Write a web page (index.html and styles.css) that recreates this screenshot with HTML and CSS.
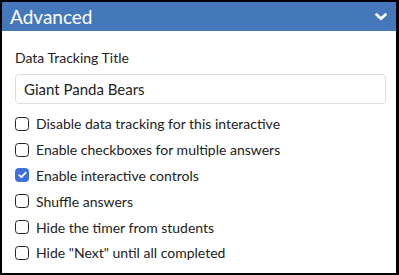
FILE: index.html
```html
<!DOCTYPE html>
<html>
<head>
    <title>Advanced</title>
    <link rel="stylesheet" href="styles.css">
</head>
<body>
    <div class="panel">
        <div class="panel-header">
            <span class="panel-title">Advanced</span>
            <svg class="chevron" width="12" height="8" viewBox="0 0 12 8">
                <path d="M1.5 1.5 L6 5.8 L10.5 1.5" fill="none" stroke="#fff" stroke-width="2.6" stroke-linecap="round" stroke-linejoin="round"/>
            </svg>
        </div>
        <div class="panel-body">
            <label class="field-label">Data Tracking Title</label>
            <input class="text-input" type="text" value="Giant Panda Bears">
            <ul class="options">
                <li class="option"><span class="box"></span>Disable data tracking for this interactive</li>
                <li class="option"><span class="box"></span>Enable checkboxes for multiple answers</li>
                <li class="option">
                    <span class="box checked">
                        <svg width="9" height="8" viewBox="0 0 9 8">
                            <path d="M1.3 4.2 L3.5 6.2 L7.7 1.6" fill="none" stroke="#fff" stroke-width="1.8" stroke-linecap="round" stroke-linejoin="round"/>
                        </svg>
                    </span>Enable interactive controls
                </li>
                <li class="option"><span class="box"></span>Shuffle answers</li>
                <li class="option"><span class="box"></span>Hide the timer from students</li>
                <li class="option"><span class="box"></span>Hide "Next" until all completed</li>
            </ul>
        </div>
    </div>
</body>
</html>
```
FILE: styles.css
```css
body {
    margin: 0;
    font-family: Lato, "Liberation Sans", sans-serif;
    background: #fff;
}

.panel {
    width: 399px;
    height: 275px;
    box-sizing: border-box;
    border: 2px solid #000;
    border-right-width: 3px;
    overflow: hidden;
}

.panel-header {
    height: 29px;
    background-color: #4577bb;
    display: flex;
    align-items: center;
    justify-content: space-between;
    padding: 0 9px 0 8px;
}

.panel-title {
    color: #fff;
    font-size: 19px;
}

.chevron {
    display: block;
}

.panel-body {
    padding: 18px 10px 0 13px;
}

.field-label {
    display: block;
    font-size: 14px;
    color: #222;
    line-height: 18px;
}

.text-input {
    display: block;
    width: 100%;
    box-sizing: border-box;
    height: 30px;
    margin-top: 7px;
    padding: 0 8px;
    border: 1px solid #ddd;
    border-radius: 4px;
    font-family: inherit;
    font-size: 15px;
    color: #222;
}

.options {
    list-style: none;
    margin: 7px 0 0;
    padding: 0;
}

.option {
    display: flex;
    align-items: center;
    gap: 7px;
    height: 25.8px;
    font-size: 14px;
    color: #222;
}

.box {
    width: 12px;
    height: 12px;
    border: 1.5px solid #222;
    border-radius: 3.5px;
    display: flex;
    align-items: center;
    justify-content: center;
    flex: none;
}

.box.checked {
    background-color: #3e6fd8;
    border-color: #3e6fd8;
}
```
